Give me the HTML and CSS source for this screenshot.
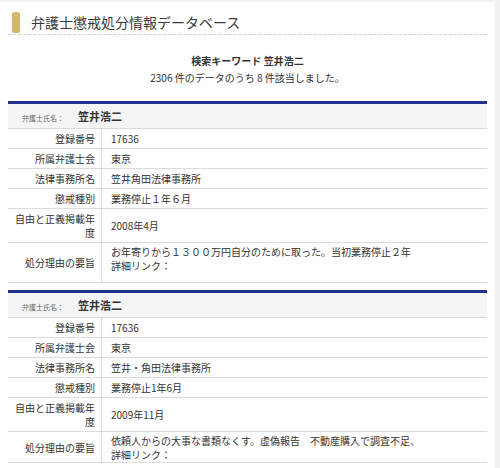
FILE: index.html
```html
<!DOCTYPE html>
<html>
<head>
    <link rel="stylesheet" href="styles.css">
</head>
<body>
    <div class="panel">
        <h1 class="page-title"><span class="title-mark"></span>弁護士懲戒処分情報データベース</h1>

        <div class="search-summary">
            <p class="keyword">検索キーワード 笠井浩二</p>
            <p>2306 件のデータのうち 8 件該当しました。</p>
        </div>

        <table class="record">
            <thead>
                <tr>
                    <th colspan="2"><span class="name-label">弁護士氏名：</span><span class="name">笠井浩二</span></th>
                </tr>
            </thead>
            <tbody>
                <tr><td class="label">登録番号</td><td>17636</td></tr>
                <tr><td class="label">所属弁護士会</td><td>東京</td></tr>
                <tr><td class="label">法律事務所名</td><td>笠井角田法律事務所</td></tr>
                <tr><td class="label">懲戒種別</td><td>業務停止１年６月</td></tr>
                <tr><td class="label">自由と正義掲載年度</td><td>2008年4月</td></tr>
                <tr><td class="label">処分理由の要旨</td><td class="reason reason-long">お年寄りから１３００万円自分のために取った。当初業務停止２年<br>詳細リンク：</td></tr>
            </tbody>
        </table>

        <table class="record">
            <thead>
                <tr>
                    <th colspan="2"><span class="name-label">弁護士氏名：</span><span class="name">笠井浩二</span></th>
                </tr>
            </thead>
            <tbody>
                <tr><td class="label">登録番号</td><td>17636</td></tr>
                <tr><td class="label">所属弁護士会</td><td>東京</td></tr>
                <tr><td class="label">法律事務所名</td><td>笠井・角田法律事務所</td></tr>
                <tr><td class="label">懲戒種別</td><td>業務停止1年6月</td></tr>
                <tr><td class="label">自由と正義掲載年度</td><td>2009年11月</td></tr>
                <tr><td class="label">処分理由の要旨</td><td class="reason">依頼人からの大事な書類なくす。虚偽報告　不動産購入で調査不足、<br>詳細リンク：</td></tr>
            </tbody>
        </table>
    </div>
</body>
</html>
```

FILE: styles.css
```css
:root {
    --navy: #22318f;
    --gold: #d2b66a;
    --text: #333333;
    --line: #dcdcdc;
}

body {
    margin: 0;
    background: #f1f1f1;
    font-family: "Noto Sans CJK JP", "Noto Sans", sans-serif;
    color: var(--text);
    font-size: 10px;
}

.panel {
    width: 479px;
    margin-top: 2px;
    padding: 0 8px 20px;
    background: white;
}

.page-title {
    display: flex;
    align-items: center;
    gap: 11px;
    margin: 0;
    padding: 10px 0 1px 4px;
    font-size: 14px;
    font-weight: normal;
    line-height: 21px;
    color: #3a3a3a;
    border-bottom: 1px dashed #cfcfcf;
}

.title-mark {
    width: 8px;
    height: 21px;
    border-radius: 2px;
    background: var(--gold);
}

.search-summary {
    padding-top: 17px;
    margin-bottom: 15px;
    text-align: center;
}

.search-summary p {
    margin: 0;
    line-height: 17px;
}

.search-summary .keyword {
    font-weight: bold;
}

.record {
    width: 100%;
    border-collapse: collapse;
    border-top: 3px solid var(--navy);
    margin-bottom: 7px;
}

.record th {
    height: 24px;
    padding: 0 0 0 14px;
    background: #f5f5f5;
    text-align: left;
    border-bottom: 1px solid var(--line);
}

.name-label {
    font-size: 7px;
    font-weight: normal;
    color: #666666;
    margin-right: 14px;
}

.name {
    font-size: 11px;
    font-weight: bold;
}

.record td {
    padding: 3px 0 2px 9px;
    line-height: 14px;
    border-bottom: 1px solid var(--line);
    vertical-align: middle;
}

.record td.label {
    width: 83px;
    padding: 3px 6px 2px 4px;
    text-align: right;
    border-right: 1px solid var(--line);
}

.record td.reason {
    padding-top: 2px;
    padding-bottom: 0;
    vertical-align: top;
}

.record td.reason-long {
    padding-bottom: 9px;
}
```
